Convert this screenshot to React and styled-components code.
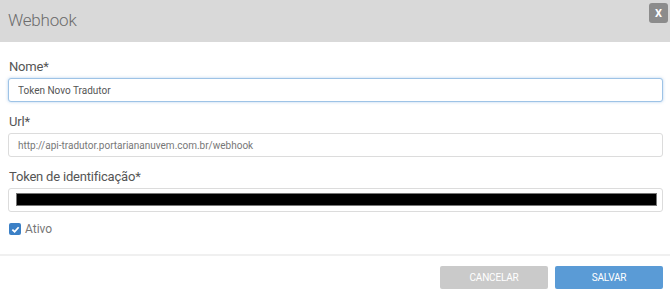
import React, { useState } from 'react';
import styled, { createGlobalStyle } from 'styled-components';

const GlobalStyle = createGlobalStyle`
  html, body {
    margin: 0;
    padding: 0;
    background: #fff;
    font-family: Roboto, "Liberation Sans", sans-serif;
  }
`;

const Modal = styled.div`
  width: 670px;
  height: 295px;
  background: #fff;
  display: flex;
  flex-direction: column;
`;

const Header = styled.div`
  height: 42px;
  background: #d9d9d9;
  display: flex;
  align-items: flex-start;
  justify-content: space-between;
  padding: 0 2px 0 8px;
  box-sizing: border-box;
`;

const Title = styled.h1`
  margin: 0;
  padding-top: 9px;
  font-size: 17px;
  font-weight: 300;
  letter-spacing: -0.2px;
  color: #6c6c6c;
  line-height: 22px;
`;

const CloseButton = styled.button`
  margin-top: 3px;
  width: 19px;
  height: 20px;
  border: none;
  border-radius: 3px;
  background: #8c8c8c;
  color: #fff;
  font-family: Roboto, sans-serif;
  font-size: 11px;
  font-weight: 700;
  padding: 0;
  cursor: pointer;
`;

const Body = styled.div`
  padding: 16px 7px 0 8px;
  display: flex;
  flex-direction: column;
  gap: 11px;
`;

const Field = styled.div`
  display: flex;
  flex-direction: column;
  gap: 3px;
`;

const Label = styled.label`
  display: block;
  height: 17px;
  line-height: 17px;
  font-size: 13px;
  letter-spacing: -0.2px;
  color: #555;
  padding-left: 1px;
`;

const Input = styled.input`
  height: 24px;
  box-sizing: border-box;
  border: 1px solid ${p => (p.$focused ? '#9ec3e6' : '#dcdcdc')};
  box-shadow: ${p => (p.$focused ? '0 0 3px rgba(102,160,220,0.5)' : 'none')};
  border-radius: 3px;
  padding: 0 9px;
  font-family: Roboto, sans-serif;
  font-size: 10px;
  color: ${p => (p.$muted ? '#777' : '#555')};
  outline: none;
  background: #fff;
`;

const TokenBox = styled.div`
  height: 24px;
  box-sizing: border-box;
  border: 1px solid #dcdcdc;
  border-radius: 3px;
  padding: 4px 5px 5px 7px;
  display: flex;
`;

const Redacted = styled.div`
  flex: 1;
  background: #000;
  border: 1px solid #777;
`;

const CheckRow = styled.label`
  display: flex;
  align-items: center;
  gap: 4px;
  margin-top: -1px;
  height: 14px;
  padding-left: 1px;
  font-size: 12px;
  color: #777;
`;

const CheckBox = styled.span`
  width: 12px;
  height: 12px;
  border-radius: 2px;
  background: #3b80c6;
  display: flex;
  align-items: center;
  justify-content: center;
`;

const Divider = styled.div`
  margin-top: 18px;
  height: 2px;
  background: #f0f0f0;
`;

const Footer = styled.div`
  display: flex;
  justify-content: flex-end;
  gap: 7px;
  padding: 10px 7px 0 0;
`;

const Button = styled.button`
  width: 108px;
  height: 23px;
  border: none;
  border-radius: 2px;
  background: ${p => (p.$primary ? '#5a9bd6' : '#cacaca')};
  color: #fff;
  font-family: Roboto, sans-serif;
  font-size: 10px;
  letter-spacing: -0.2px;
  text-transform: uppercase;
  cursor: pointer;
`;

export default function App() {
  const [nome, setNome] = useState('Token Novo Tradutor');
  const [url, setUrl] = useState('http://api-tradutor.portariananuvem.com.br/webhook');

  return (
    <>
      <GlobalStyle />
      <Modal>
        <Header>
          <Title>Webhook</Title>
          <CloseButton>X</CloseButton>
        </Header>
        <Body>
          <Field>
            <Label>Nome*</Label>
            <Input $focused value={nome} onChange={e => setNome(e.target.value)} />
          </Field>
          <Field>
            <Label>Url*</Label>
            <Input $muted value={url} onChange={e => setUrl(e.target.value)} />
          </Field>
          <Field>
            <Label>Token de identificação*</Label>
            <TokenBox>
              <Redacted />
            </TokenBox>
          </Field>
          <CheckRow>
            <CheckBox>
              <svg width="9" height="9" viewBox="0 0 10 10">
                <path d="M1.5 5.2 L4 7.5 L8.5 2.5" fill="none" stroke="#fff" strokeWidth="2" />
              </svg>
            </CheckBox>
            Ativo
          </CheckRow>
        </Body>
        <Divider />
        <Footer>
          <Button>Cancelar</Button>
          <Button $primary>Salvar</Button>
        </Footer>
      </Modal>
    </>
  );
}
